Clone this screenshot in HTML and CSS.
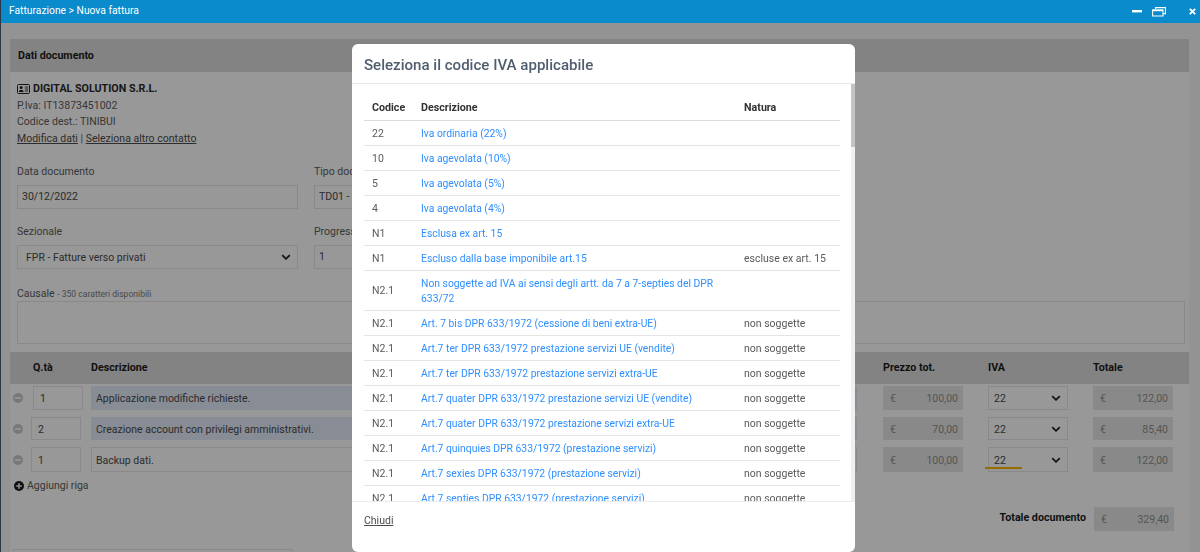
FILE: index.html
```html
<!DOCTYPE html>
<html lang="it">
<head>
<meta charset="utf-8">
<title>Nuova fattura</title>
<link rel="stylesheet" href="styles.css">
</head>
<body>
<header class="topbar">
  <span class="crumb">Fatturazione &gt; Nuova fattura</span>
  <div class="winctl">
    <svg class="ic-min" width="10" height="3" viewBox="0 0 10 3"><rect width="10" height="2.4" fill="#fff"/></svg>
    <svg class="ic-max" width="14" height="10" viewBox="0 0 14 10"><path d="M3.5 2V.6h10v6h-2.5M.6 3h10.4v6H.6z" fill="none" stroke="#fff" stroke-width="1.1"/><path d="M.6 3.4h10.4" stroke="#fff" stroke-width="1.6"/></svg>
    <svg class="ic-x" width="7" height="7" viewBox="0 0 7 7"><path d="M.8.8l5.4 5.4M6.2.8L.8 6.2" stroke="#fff" stroke-width="1.8"/></svg>
  </div>
</header>
<main class="page">
  <section class="panel">
    <h2 class="panel-head">Dati documento</h2>
    <div class="panel-body">
      <div class="contact">
        <div class="contact-name">
          <svg width="13" height="10" viewBox="0 0 13 10"><rect x=".5" y=".5" width="12" height="9" rx="1" fill="none" stroke="#222"/><circle cx="4.2" cy="3.6" r="1.5" fill="#222"/><path d="M1.8 8c0-3 4.8-3 4.8 0z" fill="#222"/><path d="M7.8 3h3.4M7.8 5h3.4M7.8 7h3.4" stroke="#222" stroke-width=".9"/></svg>
          <strong>DIGITAL SOLUTION S.R.L.</strong>
        </div>
        <div>P.Iva: IT13873451002</div>
        <div>Codice dest.: TINIBUI</div>
        <div><a class="link">Modifica dati</a> | <a class="link">Seleziona altro contatto</a></div>
      </div>
      <div class="form-row row-a">
        <div class="fg"><label>Data documento</label><div class="field">30/12/2022</div></div>
        <div class="fg"><label>Tipo documento</label><div class="field">TD01 - Fattura</div></div>
      </div>
      <div class="form-row row-b">
        <div class="fg"><label>Sezionale</label><div class="field sel">FPR - Fatture verso privati<svg class="chev" width="10" height="6" viewBox="0 0 10 6"><path d="M1.2 1.2L5 4.8l3.8-3.6" fill="none" stroke="#222" stroke-width="1.8"/></svg></div></div>
        <div class="fg"><label>Progressivo</label><div class="field">1</div></div>
      </div>
      <div class="causale">
        <label>Causale <small>- 350 caratteri disponibili</small></label>
        <div class="textarea"></div>
      </div>
    </div>

    <div class="grid grid-head">
      <span></span><span class="q">Q.tà</span><span>Descrizione</span><span>Prezzo tot.</span><span>IVA</span><span>Totale</span>
    </div>
    <div class="lines">
      <div class="grid line h24">
        <svg class="minus" width="10" height="10" viewBox="0 0 10 10"><circle cx="5" cy="5" r="5" fill="#c8c8c8"/><rect x="2" y="4" width="6" height="2" fill="#f2f2f2"/></svg>
        <div class="field qty shift">1</div><div class="field auto">Applicazione modifiche richieste.</div>
        <div class="field money"><i>€</i>100,00</div>
        <div class="field sel iva">22<svg class="chev" width="10" height="6" viewBox="0 0 10 6"><path d="M1.2 1.2L5 4.8l3.8-3.6" fill="none" stroke="#222" stroke-width="1.8"/></svg></div>
        <div class="field money"><i>€</i>122,00</div>
      </div>
      <div class="grid line h23">
        <svg class="minus" width="10" height="10" viewBox="0 0 10 10"><circle cx="5" cy="5" r="5" fill="#c8c8c8"/><rect x="2" y="4" width="6" height="2" fill="#f2f2f2"/></svg>
        <div class="field qty">2</div><div class="field auto">Creazione account con privilegi amministrativi.</div>
        <div class="field money"><i>€</i>70,00</div>
        <div class="field sel iva">22<svg class="chev" width="10" height="6" viewBox="0 0 10 6"><path d="M1.2 1.2L5 4.8l3.8-3.6" fill="none" stroke="#222" stroke-width="1.8"/></svg></div>
        <div class="field money"><i>€</i>85,40</div>
      </div>
      <div class="grid line h25">
        <svg class="minus" width="10" height="10" viewBox="0 0 10 10"><circle cx="5" cy="5" r="5" fill="#c8c8c8"/><rect x="2" y="4" width="6" height="2" fill="#f2f2f2"/></svg>
        <div class="field qty">1</div><div class="field">Backup dati.</div>
        <div class="field money"><i>€</i>100,00</div>
        <div class="field sel iva marked">22<svg class="chev" width="10" height="6" viewBox="0 0 10 6"><path d="M1.2 1.2L5 4.8l3.8-3.6" fill="none" stroke="#222" stroke-width="1.8"/></svg><span class="mark"></span></div>
        <div class="field money"><i>€</i>122,00</div>
      </div>
    </div>
    <div class="add">
      <svg width="10" height="10" viewBox="0 0 10 10"><circle cx="5" cy="5" r="5" fill="#1d1d1d"/><path d="M5 2.2v5.6M2.2 5h5.6" stroke="#e8e8e8" stroke-width="1.7"/></svg>
      <span>Aggiungi riga</span>
    </div>
    <div class="total">
      <strong>Totale documento</strong>
      <div class="field money"><i>€</i>329,40</div>
    </div>
    <div class="field tail"></div>
  </section>
</main>

<div class="overlay">
  <div class="modal">
    <div class="modal-head">Seleziona il codice IVA applicabile</div>
    <div class="modal-body">
      <table>
        <colgroup><col class="c1"><col class="c2"><col class="c3"></colgroup>
        <thead><tr><th>Codice</th><th>Descrizione</th><th>Natura</th></tr></thead>
        <tbody>
          <tr><td>22</td><td><a>Iva ordinaria (22%)</a></td><td></td></tr>
          <tr><td>10</td><td><a>Iva agevolata (10%)</a></td><td></td></tr>
          <tr><td>5</td><td><a>Iva agevolata (5%)</a></td><td></td></tr>
          <tr><td>4</td><td><a>Iva agevolata (4%)</a></td><td></td></tr>
          <tr><td>N1</td><td><a>Esclusa ex art. 15</a></td><td></td></tr>
          <tr><td>N1</td><td><a>Escluso dalla base imponibile art.15</a></td><td>escluse ex art. 15</td></tr>
          <tr><td>N2.1</td><td><a>Non soggette ad IVA ai sensi degli artt. da 7 a 7-septies del DPR 633/72</a></td><td></td></tr>
          <tr><td>N2.1</td><td><a>Art. 7 bis DPR 633/1972 (cessione di beni extra-UE)</a></td><td>non soggette</td></tr>
          <tr><td>N2.1</td><td><a>Art.7 ter DPR 633/1972 prestazione servizi UE (vendite)</a></td><td>non soggette</td></tr>
          <tr><td>N2.1</td><td><a>Art.7 ter DPR 633/1972 prestazione servizi extra-UE</a></td><td>non soggette</td></tr>
          <tr><td>N2.1</td><td><a>Art.7 quater DPR 633/1972 prestazione servizi UE (vendite)</a></td><td>non soggette</td></tr>
          <tr><td>N2.1</td><td><a>Art.7 quater DPR 633/1972 prestazione servizi extra-UE</a></td><td>non soggette</td></tr>
          <tr><td>N2.1</td><td><a>Art.7 quinquies DPR 633/1972 (prestazione servizi)</a></td><td>non soggette</td></tr>
          <tr><td>N2.1</td><td><a>Art.7 sexies DPR 633/1972 (prestazione servizi)</a></td><td>non soggette</td></tr>
          <tr><td>N2.1</td><td><a>Art.7 septies DPR 633/1972 (prestazione servizi)</a></td><td>non soggette</td></tr>
        </tbody>
      </table>
      <div class="scrolltrack"><div class="scrollthumb"></div></div>
    </div>
    <div class="modal-foot"><a class="link">Chiudi</a></div>
  </div>
</div>
</body>
</html>
```
FILE: styles.css
```css
* { box-sizing: border-box; }
html, body { margin: 0; height: 552px; overflow: hidden; }
body {
  font-family: Roboto, "Noto Sans", sans-serif;
  font-size: 10.5px;
  line-height: 16.6px;
  color: #5c5c5c;
  background: #f5f5f5;
  border-left: 1px solid #4b5a78;
}
label { display: block; }
strong { color: #1c1c1c; font-size: 10.7px; font-weight: 700; }

.topbar {
  position: relative;
  z-index: 3;
  height: 23px;
  background: #0a8bcb;
  color: #fff;
  display: flex;
  align-items: center;
  justify-content: space-between;
  padding: 0 4px 0 9px;
  margin-left: -1px;
}
.crumb { font-size: 10.3px; }
.winctl { display: flex; align-items: center; gap: 10px; }
.ic-x { margin-left: 13px; }

.page { padding: 16px 11px 0 9px; }
.panel { background: #fdfdfd; height: 520px; }
.panel-head {
  margin: 0;
  height: 33px;
  padding: 0 8px;
  background: #dadada;
  color: #1c1c1c;
  font-size: 10.7px;
  font-weight: 700;
  line-height: 33px;
}
.panel-body { padding: 9px 7px 0; }
.contact-name { display: flex; align-items: center; gap: 3px; }
.contact-name strong { color: #2a2a2a; }
.link { color: #4c4c4c; text-decoration: underline; }

.form-row { display: grid; grid-template-columns: 281px 281px; column-gap: 16px; }
.row-a { margin-top: 17px; }
.row-b { margin-top: 15px; }
.fg label { margin-bottom: 4px; }
.field {
  display: flex;
  align-items: center;
  height: 24px;
  padding: 1px 4px 0;
  background: #fdfdfd;
  border: 1px solid #e4e4e4;
  color: #4a4a4a;
  white-space: nowrap;
  overflow: hidden;
}
.sel { justify-content: space-between; padding: 3px 6px 0 8px; }
.iva { padding-left: 5px; }
.chev { flex: none; margin-top: -3px; }
.causale { margin-top: 17px; }
.causale small { font-size: 8.6px; color: #7c7c7c; }
.causale label { margin-bottom: -1px; }
.textarea { height: 43px; width: 1168px; border: 1px solid #e4e4e4; background: #fdfdfd; }

.grid {
  display: grid;
  grid-template-columns: 18px 50px 776px 106px 105px 105px;
  padding-left: 3px;
}
.grid > :nth-child(3) { margin-left: 10px; }
.grid > :nth-child(4) { margin-left: 26px; }
.grid > :nth-child(5),
.grid > :nth-child(6) { margin-left: 25px; }
.grid-head {
  margin-top: 8px;
  height: 32px;
  padding-top: 1px;
  align-items: center;
  background: #dadada;
  color: #1c1c1c;
  font-size: 10.7px;
  font-weight: 700;
}
.grid-head .q { padding-left: 2px; }

.lines { margin-top: 2px; display: flex; flex-direction: column; gap: 7px; }
.line { align-items: center; }
.h24 { height: 24px; }
.h23 { height: 23px; }
.h25 { height: 25px; }
.line .field { height: 100%; padding-top: 3px; }
.qty { padding-left: 6px; }
.shift { transform: translateX(2px); }
.auto { background: #e3e9f7; border-color: #e3e9f7; }
.money {
  justify-content: space-between;
  background: #e5e5e5;
  border-color: #e5e5e5;
  color: #8d8d8d;
  padding-left: 6px;
}
.money i { font-style: normal; }
.iva { position: relative; overflow: visible; }
.mark {
  position: absolute;
  left: -4px;
  bottom: 2px;
  width: 37px;
  height: 2px;
  background: #ffb400;
  z-index: 1;
}

.add { display: flex; align-items: center; gap: 3px; margin: 6px 0 0 4px; }
.total {
  display: flex;
  justify-content: flex-end;
  align-items: center;
  gap: 8px;
  padding-right: 15px;
  margin-top: 12px;
}
.total .field { width: 80px; padding-top: 3px; }
.tail { width: 280px; margin: 18px 0 0 3px; }

.overlay {
  position: fixed;
  inset: 0;
  z-index: 2;
  background: rgba(0, 0, 0, .4);
  padding: 44px 0 0 352px;
}
.modal {
  width: 503px;
  height: 508px;
  background: #fff;
  border-radius: 6px;
  display: flex;
  flex-direction: column;
  overflow: hidden;
}
.modal-head {
  flex: none;
  height: 40px;
  padding: 1px 12px 0;
  border-bottom: 1px solid #e8eaea;
  color: #4f5d6e;
  font-size: 15.07px;
  font-weight: 500;
  line-height: 40px;
}
.modal-body {
  position: relative;
  flex: none;
  height: 417px;
  padding: 14px 15px 0 12px;
  overflow: hidden;
}
.modal-foot {
  flex: none;
  height: 51px;
  padding: 11px 12px;
  border-top: 1px solid #ececec;
}
table { width: 476px; border-collapse: collapse; table-layout: fixed; color: #5a5a5a; }
.c1 { width: 49px; }
.c2 { width: 323px; }
th {
  text-align: left;
  padding: 1px 8px 2px;
  height: 22px;
  color: #333;
  font-size: 10.7px;
  font-weight: 700;
  border-bottom: 1px solid #ddd;
}
td {
  padding: 5px 8px 4px;
  border-bottom: 1px solid #e4e4e4;
  line-height: 15px;
  height: 25px;
  vertical-align: middle;
}
td a { color: #2f8fff; font-size: 10.35px; }
.scrolltrack { position: absolute; top: 0; right: 0; bottom: 0; width: 4px; background: #f0f0f0; }
.scrollthumb { height: 63px; background: #c4c4c4; }
```
